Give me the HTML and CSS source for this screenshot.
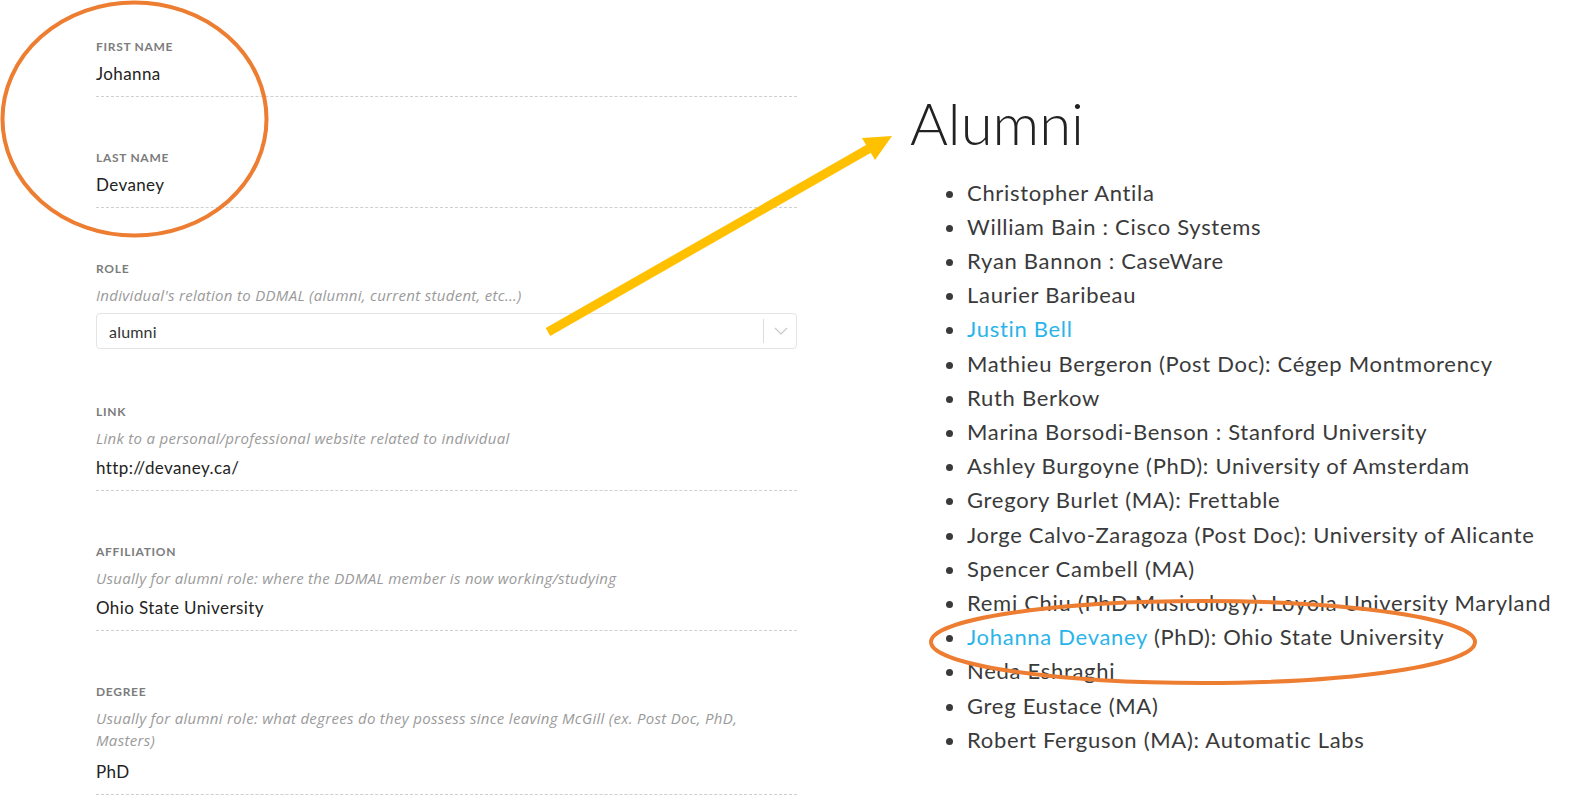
FILE: index.html
```html
<!DOCTYPE html>
<html lang="en">
<head>
<meta charset="utf-8">
<title>Alumni</title>
<link rel="stylesheet" href="styles.css">
</head>
<body>
<div class="page">
  <form class="form">
    <div class="field">
      <div class="label">First name</div>
      <div class="value">Johanna</div>
    </div>
    <div class="field">
      <div class="label">Last name</div>
      <div class="value">Devaney</div>
    </div>
    <div class="field field-select">
      <div class="label">Role</div>
      <div class="help">Individual's relation to DDMAL (alumni, current student, etc...)</div>
      <div class="select">
        <span class="select-value">alumni</span>
        <span class="select-sep"></span>
        <svg class="chevron" width="14" height="8" viewBox="0 0 14 8"><path d="M1 1 L7 7 L13 1" fill="none" stroke="#c8c8c8" stroke-width="1.2"/></svg>
      </div>
    </div>
    <div class="field">
      <div class="label">Link</div>
      <div class="help">Link to a personal/professional website related to individual</div>
      <div class="value">http://devaney.ca/</div>
    </div>
    <div class="field">
      <div class="label">Affiliation</div>
      <div class="help">Usually for alumni role: where the DDMAL member is now working/studying</div>
      <div class="value">Ohio State University</div>
    </div>
    <div class="field field-last">
      <div class="label">Degree</div>
      <div class="help">Usually for alumni role: what degrees do they possess since leaving McGill (ex. Post Doc, PhD, Masters)</div>
      <div class="value">PhD</div>
    </div>
  </form>

  <section class="alumni">
    <h1 class="title">Alumni</h1>
    <ul class="list">
      <li>Christopher Antila</li>
      <li>William Bain : Cisco Systems</li>
      <li>Ryan Bannon : CaseWare</li>
      <li>Laurier Baribeau</li>
      <li><a class="link" href="#">Justin Bell</a></li>
      <li>Mathieu Bergeron (Post Doc): Cégep Montmorency</li>
      <li>Ruth Berkow</li>
      <li>Marina Borsodi-Benson : Stanford University</li>
      <li>Ashley Burgoyne (PhD): University of Amsterdam</li>
      <li>Gregory Burlet (MA): Frettable</li>
      <li>Jorge Calvo-Zaragoza (Post Doc): University of Alicante</li>
      <li>Spencer Cambell (MA)</li>
      <li>Remi Chiu (PhD Musicology): Loyola University Maryland</li>
      <li><a class="link" href="#">Johanna Devaney</a> (PhD): Ohio State University</li>
      <li>Neda Eshraghi</li>
      <li>Greg Eustace (MA)</li>
      <li>Robert Ferguson (MA): Automatic Labs</li>
    </ul>
  </section>
</div>

<svg class="annotations" width="1572" height="802" viewBox="0 0 1572 802">
  <ellipse cx="134.5" cy="119" rx="132" ry="116.5" fill="none" stroke="#ed7d31" stroke-width="4"/>
  <ellipse cx="1203" cy="642" rx="272" ry="41" fill="none" stroke="#ed7d31" stroke-width="4"/>
  <line x1="548" y1="332" x2="870" y2="148" stroke="#ffc000" stroke-width="9"/>
  <polygon points="892,136 862,138 875,160" fill="#ffc000"/>
</svg>
</body>
</html>
```

FILE: styles.css
```css
html, body {
  margin: 0;
  padding: 0;
  background: #ffffff;
}

body {
  width: 1572px;
  height: 802px;
  overflow: hidden;
  position: relative;
  font-family: "Lato", "Noto Sans", sans-serif;
}

.page {
  display: flex;
  align-items: flex-start;
  padding-left: 96px;
  gap: 113px;
}

/* ---------- left form ---------- */
.form {
  width: 701px;
  padding-top: 40px;
  display: flex;
  flex-direction: column;
  gap: 54px;
}

.field {
  border-bottom: 1px dashed #cfcfcf;
  padding-bottom: 10px;
}

.field-select {
  border-bottom: none;
  padding-bottom: 0;
}

.field-last .help {
  margin-bottom: 9px;
}

.label {
  font-size: 12px;
  line-height: 14px;
  font-weight: 700;
  text-transform: uppercase;
  letter-spacing: 0.7px;
  color: #7c7c7c;
  margin-bottom: 8px;
}

.help {
  font-family: "Open Sans", "Noto Sans", sans-serif;
  font-size: 15px;
  line-height: 22px;
  font-style: italic;
  letter-spacing: 0.3px;
  color: #9a9a9a;
  margin-bottom: 7px;
}

.value {
  font-size: 17px;
  line-height: 24px;
  letter-spacing: 0.4px;
  color: #222222;
}

.select {
  margin-top: 7px;
  margin-bottom: 2px;
  height: 34px;
  border: 1px solid #e4e4e4;
  border-radius: 4px;
  display: flex;
  align-items: center;
  padding-left: 12px;
}

.select-value {
  flex: 1;
  font-size: 16px;
  letter-spacing: 0.2px;
  color: #333333;
}

.select-sep {
  width: 1px;
  height: 24px;
  background: #dddddd;
}

.chevron {
  margin: 0 8px 0 10px;
}

/* ---------- right list ---------- */
.alumni {
  padding-top: 94px;
}

.title {
  margin: 0;
  font-size: 58px;
  line-height: 58px;
  font-weight: 300;
  color: #222222;
}

.list {
  margin: 23.5px 0 0 0;
  padding-left: 57px;
  font-size: 22px;
  line-height: 34.2px;
  letter-spacing: 0.7px;
  color: #3a3a3a;
}

.link {
  color: #2ab4ea;
  text-decoration: none;
}

/* ---------- annotation overlay ---------- */
.annotations {
  position: absolute;
  left: 0;
  top: 0;
  pointer-events: none;
}
```
